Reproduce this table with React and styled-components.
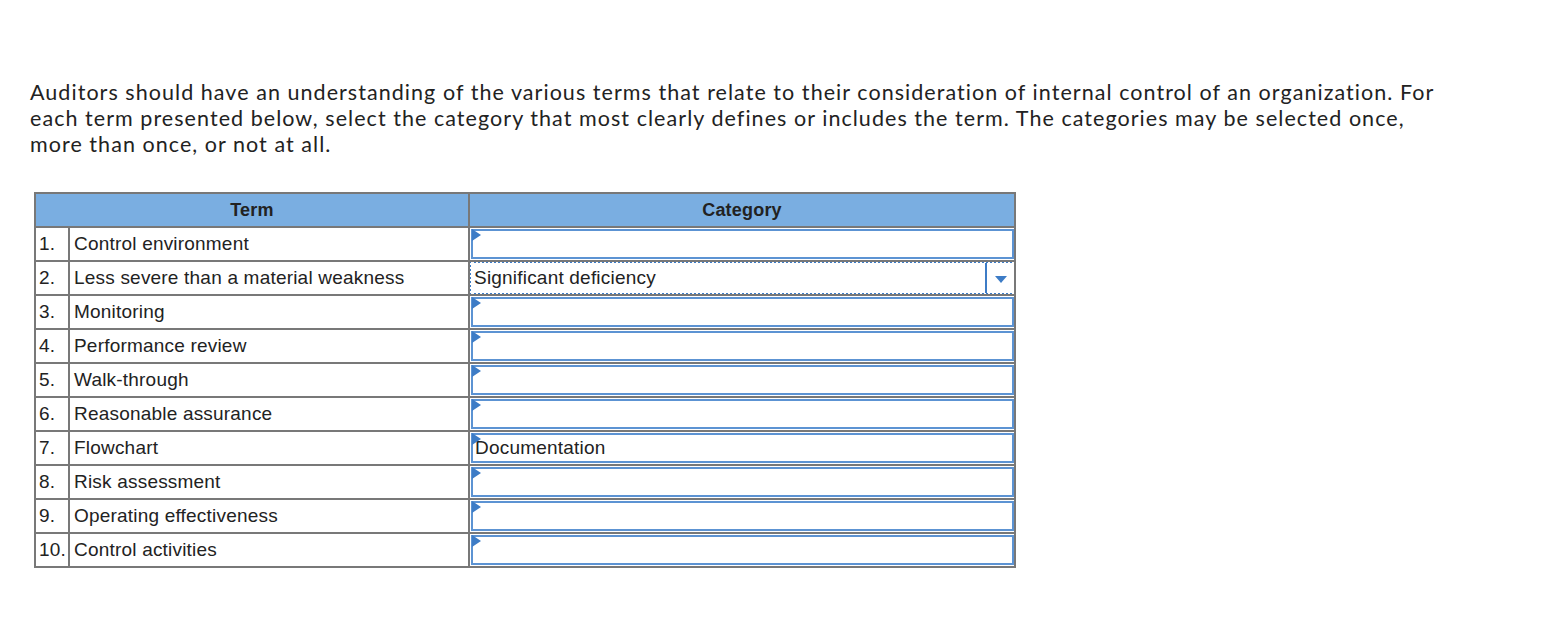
import React from 'react'
import styled, { createGlobalStyle } from 'styled-components'

const GlobalStyle = createGlobalStyle`
  body {
    margin: 0;
    background: #fff;
  }
`

const Page = styled.div`
  padding: 79px 0 0 30px;
`

const Intro = styled.p`
  margin: 0;
  width: 1405px;
  font-family: Lato, 'Open Sans', sans-serif;
  font-size: 21.5px;
  letter-spacing: 1.05px;
  line-height: 26px;
  color: #222;
`

const Table = styled.table`
  margin: 35px 0 0 4px;
  border-collapse: collapse;
  table-layout: fixed;
  width: 980px;
  border: 2px solid #787878;
  font-family: 'Liberation Sans', Arial, sans-serif;
  font-size: 19px;
  letter-spacing: 0.2px;
  color: #222;
`

const Col = styled.col`
  width: ${p => p.$w}px;
`

const HeadCell = styled.th`
  height: 32px;
  padding: 0;
  background: #7aaee1;
  border: 2px solid #787878;
  font-size: 18px;
  font-weight: bold;
  text-align: center;
`

const Cell = styled.td`
  height: 32px;
  padding: 0 4px;
  border: 2px solid #787878;
  white-space: nowrap;
`

const NumCell = styled(Cell)`
  padding: 0 0 0 3px;
`

const InputCell = styled.td`
  height: 32px;
  padding: 0;
  border: 2px solid #787878;
`

const Box = styled.div`
  position: relative;
  box-sizing: border-box;
  height: 30px;
  margin: 1px 0 1px 1px;
  border: 2px solid #5c93d3;
  display: flex;
  align-items: center;
  padding-left: 2px;
`

const Flag = styled.span`
  position: absolute;
  left: -1px;
  top: -2px;
  width: 0;
  height: 0;
  border-top: 6px solid transparent;
  border-bottom: 6px solid transparent;
  border-left: 9px solid #3d7cc6;
`

const Select = styled.div`
  box-sizing: border-box;
  height: 34px;
  margin: -1px -2px -1px -1px;
  border: 2px dotted #3d7cc6;
  display: flex;
  align-items: center;
`

const SelectText = styled.span`
  flex: 1;
  padding-left: 3px;
`

const Arrow = styled.span`
  width: 27px;
  height: 100%;
  border-left: 2px solid #3d7cc6;
  display: flex;
  align-items: center;
  justify-content: center;
  &::after {
    content: '';
    border-left: 6px solid transparent;
    border-right: 6px solid transparent;
    border-top: 7px solid #3d7cc6;
    margin-top: 2px;
  }
`

const rows = [
  ['1.', 'Control environment', ''],
  ['2.', 'Less severe than a material weakness', 'Significant deficiency', true],
  ['3.', 'Monitoring', ''],
  ['4.', 'Performance review', ''],
  ['5.', 'Walk-through', ''],
  ['6.', 'Reasonable assurance', ''],
  ['7.', 'Flowchart', 'Documentation'],
  ['8.', 'Risk assessment', ''],
  ['9.', 'Operating effectiveness', ''],
  ['10.', 'Control activities', ''],
]

export default function App() {
  return (
    <>
      <GlobalStyle />
      <Page>
        <Intro>
          Auditors should have an understanding of the various terms that relate to their consideration of internal control of an organization. For each term presented below, select the category that most clearly defines or includes the term. The categories may be selected once, more than once, or not at all.
        </Intro>
        <Table>
          <colgroup>
            <Col $w={34} />
            <Col $w={400} />
            <Col $w={546} />
          </colgroup>
          <thead>
            <tr>
              <HeadCell colSpan={2}>Term</HeadCell>
              <HeadCell>Category</HeadCell>
            </tr>
          </thead>
          <tbody>
            {rows.map(([n, term, cat, open]) => (
              <tr key={n}>
                <NumCell>{n}</NumCell>
                <Cell>{term}</Cell>
                <InputCell>
                  {open ? (
                    <Select>
                      <SelectText>{cat}</SelectText>
                      <Arrow />
                    </Select>
                  ) : (
                    <Box>
                      <Flag />
                      {cat}
                    </Box>
                  )}
                </InputCell>
              </tr>
            ))}
          </tbody>
        </Table>
      </Page>
    </>
  )
}
